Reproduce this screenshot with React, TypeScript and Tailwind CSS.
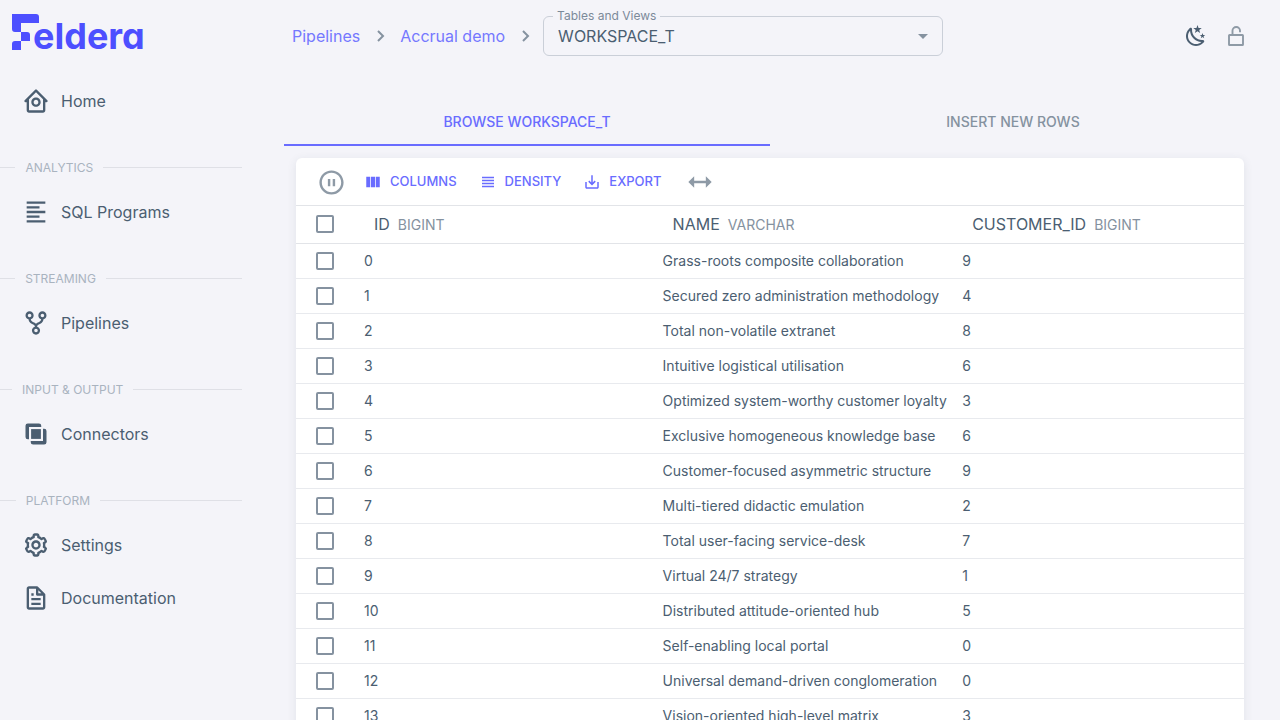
import type { ReactNode } from 'react'
import {
  BiAlignLeft,
  BiChevronRight,
  BiCog,
  BiFile,
  BiGitRepoForked,
  BiHomeCircle,
  BiMoveHorizontal,
  BiPauseCircle,
} from 'react-icons/bi'

const rows: [string, string][] = [
  ['Grass-roots composite collaboration', '9'],
  ['Secured zero administration methodology', '4'],
  ['Total non-volatile extranet', '8'],
  ['Intuitive logistical utilisation', '6'],
  ['Optimized system-worthy customer loyalty', '3'],
  ['Exclusive homogeneous knowledge base', '6'],
  ['Customer-focused asymmetric structure', '9'],
  ['Multi-tiered didactic emulation', '2'],
  ['Total user-facing service-desk', '7'],
  ['Virtual 24/7 strategy', '1'],
  ['Distributed attitude-oriented hub', '5'],
  ['Self-enabling local portal', '0'],
  ['Universal demand-driven conglomeration', '0'],
  ['Vision-oriented high-level matrix', '3'],
]

function Logo() {
  return (
    <a href="#" className="flex h-16 items-start pt-3.5 pl-3 text-[#4d4fff]">
      <svg width="27" height="36" viewBox="0 0 27 36" fill="currentColor" aria-hidden="true">
        <path d="M0 0h24a3 3 0 0 1 3 3v6H9v9H3a3 3 0 0 1-3-3z" />
        <path d="M9 18h6a3 3 0 0 1 3 3v6H9z" />
        <path d="M3 27h6v9H0v-6a3 3 0 0 1 3-3z" />
      </svg>
      <span className="-ml-1.5 pt-1 text-[36px] leading-[36px] font-bold [font-feature-settings:'cv11']">
        eldera
      </span>
    </a>
  )
}

function ConnectorsIcon() {
  return (
    <svg width="28" height="28" viewBox="0 0 24 24" fill="currentColor" aria-hidden="true">
      <path d="M16.5 6V5a2 2 0 0 0-2-2H5a2 2 0 0 0-2 2v9.5a2 2 0 0 0 2 2h1V6z" />
      <path d="M7.8 7.8h8.4v8.4H7.8z" />
      <path d="M18 7.5V18H7.5v1a2 2 0 0 0 2 2H19a2 2 0 0 0 2-2V9.5a2 2 0 0 0-2-2z" />
    </svg>
  )
}

function NavItem({ icon, children }: { icon: ReactNode; children: ReactNode }) {
  return (
    <a href="#" className="flex h-[53px] items-center gap-[11px] pl-[22px] text-base">
      {icon}
      <span>{children}</span>
    </a>
  )
}

function NavSection({ children }: { children: ReactNode }) {
  return (
    <div className="flex h-[58px] items-center gap-2.5 pt-[23px] text-xs text-[#a9b3bf]">
      <span className="h-px grow bg-[#dfe0e6]" />
      <h2>{children}</h2>
      <span className="h-px grow-9 bg-[#dfe0e6]" />
    </div>
  )
}

function ToolButton({ path, children }: { path: string; children: ReactNode }) {
  return (
    <button type="button" className="flex items-center gap-2 text-[13px] font-medium text-[#696cff]">
      <svg width="18" height="18" viewBox="0 0 24 24" fill="currentColor" aria-hidden="true">
        <path d={path} />
      </svg>
      {children}
    </button>
  )
}

function Check({ label }: { label: string }) {
  return (
    <input
      type="checkbox"
      aria-label={label}
      className="ml-5 block size-[18px] appearance-none rounded-xs border-2 border-[#8592a0] bg-white checked:bg-[#696cff]"
    />
  )
}

function HeadCell({ name, type }: { name: string; type: string }) {
  return (
    <th scope="col" className="pl-5 text-left text-base font-normal whitespace-nowrap">
      {name}
      <span className="ml-2 text-sm text-[#8592a0]">{type}</span>
    </th>
  )
}

export default function App() {
  return (
    <div className="flex h-screen overflow-hidden bg-[#f4f4f9] font-['Inter',sans-serif] text-[#4b5e71]">
      <aside className="w-[260px] shrink-0">
        <Logo />
        <nav className="pt-2.5 pr-[18px]">
          <NavItem icon={<BiHomeCircle size={28} />}>Home</NavItem>
          <NavSection>ANALYTICS</NavSection>
          <NavItem icon={<BiAlignLeft size={28} />}>SQL Programs</NavItem>
          <NavSection>STREAMING</NavSection>
          <NavItem icon={<BiGitRepoForked size={28} />}>Pipelines</NavItem>
          <NavSection>INPUT &amp; OUTPUT</NavSection>
          <NavItem icon={<ConnectorsIcon />}>Connectors</NavItem>
          <NavSection>PLATFORM</NavSection>
          <NavItem icon={<BiCog size={28} />}>Settings</NavItem>
          <NavItem icon={<BiFile size={28} />}>Documentation</NavItem>
        </nav>
      </aside>

      <div className="flex min-w-0 grow flex-col px-6">
        <header className="flex h-[72px] shrink-0 items-center pl-2">
          <nav className="flex items-center gap-2 text-base text-[#7578ff]">
            <a href="#">Pipelines</a>
            <BiChevronRight size={24} className="text-[#8592a0]" />
            <a href="#">Accrual demo</a>
            <BiChevronRight size={24} className="text-[#8592a0]" />
          </nav>
          <div className="relative ml-1.5 w-[400px]">
            <label
              htmlFor="relation"
              className="absolute -top-2 left-2.5 bg-[#f4f4f9] px-1 text-xs text-[#7c8a99]"
            >
              Tables and Views
            </label>
            <select
              id="relation"
              className="h-10 w-full appearance-none rounded-md border border-[#cacfd8] bg-transparent px-3.5 text-base"
            >
              <option>WORKSPACE_T</option>
            </select>
            <svg
              className="pointer-events-none absolute top-2 right-2 text-[#8592a0]"
              width="24"
              height="24"
              viewBox="0 0 24 24"
              fill="currentColor"
              aria-hidden="true"
            >
              <path d="M7 10l5 5 5-5z" />
            </svg>
          </div>
          <div className="ml-auto flex items-center gap-4 pr-2">
            <button type="button" aria-label="Switch theme">
              <svg width="24" height="24" viewBox="0 0 24 24" fill="currentColor">
                <path d="M17.75,4.09L15.22,6.03L16.13,9.09L13.5,7.28L10.87,9.09L11.78,6.03L9.25,4.09L12.44,4L13.5,1L14.56,4L17.75,4.09M21.25,11L19.61,12.25L20.2,14.23L18.5,13.06L16.8,14.23L17.39,12.25L15.75,11L17.81,10.95L18.5,9L19.19,10.95L21.25,11M18.97,15.95C19.8,15.87 20.69,17.05 20.16,17.8C19.84,18.25 19.5,18.67 19.08,19.07C15.17,23 8.84,23 4.94,19.07C1.03,15.17 1.03,8.83 4.94,4.93C5.34,4.53 5.76,4.17 6.21,3.85C6.96,3.32 8.14,4.21 8.06,5.04C7.79,7.9 8.75,10.87 10.95,13.06C13.14,15.26 16.1,16.22 18.97,15.95M17.33,17.97C14.5,17.81 11.7,16.64 9.53,14.5C7.36,12.31 6.2,9.5 6.04,6.68C3.23,9.82 3.34,14.64 6.35,17.66C9.37,20.67 14.19,20.78 17.33,17.97Z" />
              </svg>
            </button>
            <button type="button" aria-label="Authentication" className="text-[#8e9aa6]">
              <svg
                width="24"
                height="24"
                viewBox="0 0 24 24"
                fill="none"
                stroke="currentColor"
                strokeWidth="1.9"
                strokeLinejoin="round"
              >
                <rect x="5" y="11" width="14" height="10" rx="0.6" />
                <path d="M8.5 11V6.75a3.75 3.75 0 0 1 7.5 0V8.2" />
              </svg>
            </button>
          </div>
        </header>

        <div role="tablist" className="mt-[26px] grid h-12 shrink-0 grid-cols-2 text-sm font-medium">
          <button
            type="button"
            role="tab"
            aria-selected="true"
            className="border-b-2 border-[#696cff] pt-0.5 text-[#696cff]"
          >
            BROWSE WORKSPACE_T
          </button>
          <button type="button" role="tab" aria-selected="false" className="text-[#8592a0]">
            INSERT NEW ROWS
          </button>
        </div>

        <main className="mx-3 mt-3 shrink-0 rounded-md bg-white shadow-[0_2px_10px_0_rgba(50,71,92,0.1)]">
          <div className="flex h-12 items-center border-b border-[#e2e4e8] pt-px pl-[21px] text-[#8e9aa6]">
            <button type="button" aria-label="Pause">
              <BiPauseCircle size={29} />
            </button>
            <div className="ml-[18px] mr-6 flex gap-[22px]">
              <ToolButton path="M14.67 5v14H9.33V5h5.34zm1 14H21V5h-5.33v14zm-7.34 0V5H3v14h5.33z">
                COLUMNS
              </ToolButton>
              <ToolButton path="M4 15h16v-2H4v2zm0 4h16v-2H4v2zm0-8h16V9H4v2zm0-6v2h16V5H4z">
                DENSITY
              </ToolButton>
              <ToolButton path="M19 12v7H5v-7H3v7c0 1.1.9 2 2 2h14c1.1 0 2-.9 2-2v-7h-2zm-6 .67l2.59-2.58L17 11.5l-5 5-5-5 1.41-1.41L11 12.67V3h2z">
                EXPORT
              </ToolButton>
            </div>
            <button type="button" aria-label="Fit columns">
              <BiMoveHorizontal size={28} />
            </button>
          </div>
          <table className="w-full table-fixed border-collapse text-sm">
            <colgroup>
              <col className="w-[58px]" />
              <col className="w-[31.5%]" />
              <col className="w-[31.6%]" />
              <col />
            </colgroup>
            <thead>
              <tr className="h-[37px] border-b border-[#e2e4e8]">
                <th scope="col">
                  <Check label="Select all rows" />
                </th>
                <HeadCell name="ID" type="BIGINT" />
                <HeadCell name="NAME" type="VARCHAR" />
                <HeadCell name="CUSTOMER_ID" type="BIGINT" />
              </tr>
            </thead>
            <tbody>
              {rows.map(([name, customer], id) => (
                <tr key={id} className="h-[35px] border-b border-[#e8eaee]">
                  <td>
                    <Check label={`Select row ${id}`} />
                  </td>
                  <td className="pl-2.5">{id}</td>
                  <td className="pl-2.5 whitespace-nowrap">{name}</td>
                  <td className="pl-2.5">{customer}</td>
                </tr>
              ))}
            </tbody>
          </table>
        </main>
      </div>
    </div>
  )
}
